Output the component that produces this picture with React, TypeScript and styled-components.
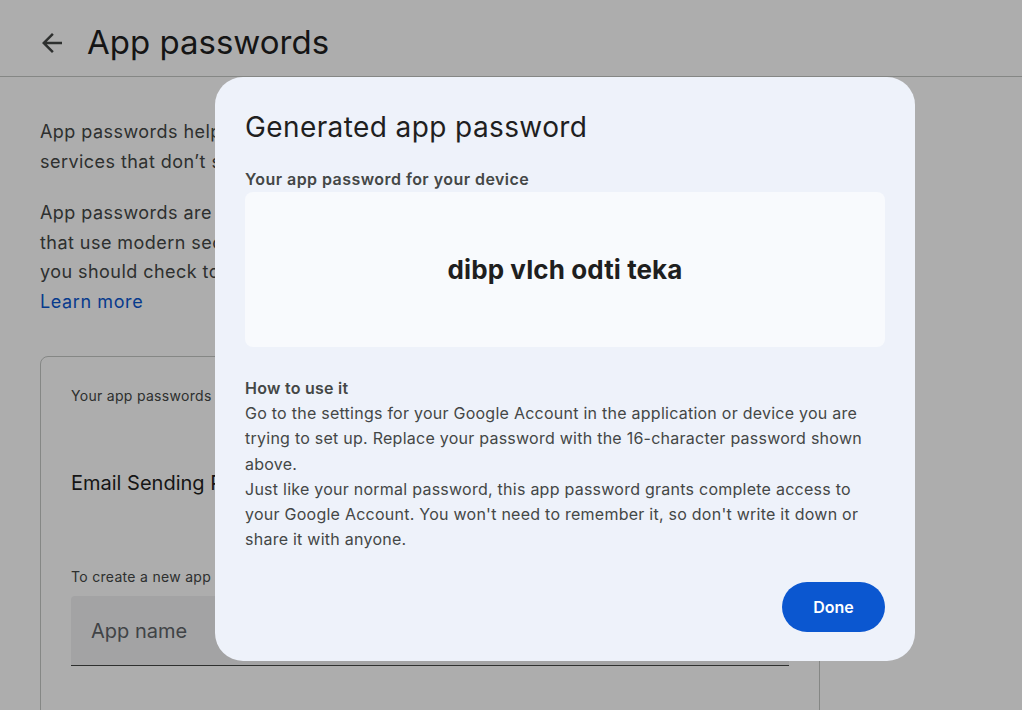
import { type FC } from 'react';
import styled, { createGlobalStyle } from 'styled-components';

const GlobalStyle = createGlobalStyle`
  html, body {
    margin: 0;
    padding: 0;
    background: #ffffff;
    font-family: Inter, 'Open Sans', Roboto, sans-serif;
    color: #1f1f1f;
  }
  * {
    box-sizing: border-box;
  }
`;

const Page = styled.div`
  position: relative;
  width: 1022px;
  height: 710px;
  overflow: hidden;
  background: #ffffff;
`;

const Header = styled.header`
  display: flex;
  align-items: center;
  gap: 20px;
  height: 77px;
  padding: 0 0 0 37px;
  border-bottom: 1px solid #c4c7c5;
`;

const BackButton = styled.button`
  display: flex;
  align-items: center;
  justify-content: center;
  width: 30px;
  height: 30px;
  padding: 0;
  border: none;
  background: none;
  color: #444746;
  margin-top: 9px;
`;

const PageTitle = styled.h1`
  margin: 0;
  font-size: 33px;
  font-weight: 400;
  line-height: 40px;
  color: #1f1f1f;
  margin-top: 7px;
`;

const Content = styled.main`
  display: flex;
  flex-direction: column;
  padding: 40px 202px 0 40px;
`;

const Paragraph = styled.p`
  margin: 0 0 22px;
  max-width: 680px;
  font-size: 18px;
  line-height: 29.5px;
  letter-spacing: 0.45px;
  color: #444746;
`;

const LearnMore = styled.a`
  align-self: flex-start;
  color: #0b57d0;
  font-size: 18px;
  line-height: 29.5px;
  letter-spacing: 0.6px;
  text-decoration: none;
  margin-top: -22px;
`;

const Card = styled.section`
  margin-top: 40px;
  border: 1px solid #c4c7c5;
  border-radius: 8px;
  padding: 29px 30px 80px 30px;
  display: flex;
  flex-direction: column;
`;

const SmallLabel = styled.div`
  font-size: 14px;
  line-height: 20px;
  letter-spacing: 0.3px;
  color: #444746;
`;

const PasswordRow = styled.div`
  display: flex;
  align-items: center;
  height: 104px;
  margin: 25px 0 32px;
  font-size: 20px;
  color: #1f1f1f;
`;

const NameField = styled.div`
  margin-top: 9px;
  height: 70px;
  display: flex;
  align-items: center;
  padding: 0 20px;
  background: #f0f1f2;
  border-bottom: 1px solid #444746;
  border-radius: 4px 4px 0 0;
  font-size: 20px;
  color: #5f6368;
`;

const Scrim = styled.div`
  position: absolute;
  inset: 0;
  background: rgba(0, 0, 0, 0.32);
`;

const Dialog = styled.div`
  position: absolute;
  left: 215px;
  top: 77px;
  width: 700px;
  height: 584px;
  border-radius: 28px;
  background: #eef2fa;
  padding: 32px 30px 29px;
  display: flex;
  flex-direction: column;
`;

const DialogTitle = styled.h2`
  margin: 0;
  font-size: 28px;
  font-weight: 400;
  line-height: 36px;
  letter-spacing: 0.4px;
  color: #1f1f1f;
`;

const DialogLabel = styled.div`
  margin-top: 22px;
  font-size: 16px;
  font-weight: 600;
  line-height: 24px;
  letter-spacing: 0.45px;
  color: #444746;
`;

const PasswordBox = styled.div`
  margin-top: 1px;
  height: 155px;
  display: flex;
  align-items: center;
  justify-content: center;
  border-radius: 8px;
  background: #f8fafd;
  font-size: 26px;
  font-weight: 700;
  letter-spacing: 0.1px;
  color: #1f1f1f;
`;

const HowTo = styled.div`
  margin-top: 29px;
  font-size: 16px;
  line-height: 25.2px;
  letter-spacing: 0.25px;
  color: #444746;

  strong {
    font-weight: 600;
    display: block;
  }

  p {
    margin: 0;
  }
`;

const Actions = styled.div`
  margin-top: auto;
  display: flex;
  justify-content: flex-end;
`;

const DoneButton = styled.button`
  height: 50px;
  width: 103px;
  border: none;
  border-radius: 25px;
  background: #0b57d0;
  color: #ffffff;
  font-family: inherit;
  font-size: 16px;
  font-weight: 600;
  cursor: pointer;
`;

const ArrowBack: FC = () => (
  <svg width="30" height="30" viewBox="0 0 24 24" fill="currentColor">
    <path d="M20 11H7.83l5.59-5.59L12 4l-8 8 8 8 1.41-1.41L7.83 13H20v-2z" />
  </svg>
);

export default function App() {
  return (
    <>
      <GlobalStyle />
      <Page>
        <Header>
          <BackButton aria-label="Back">
            <ArrowBack />
          </BackButton>
          <PageTitle>App passwords</PageTitle>
        </Header>
        <Content>
          <Paragraph>
            App passwords help you sign into your Google Account on older apps and services
            that don’t support modern security standards.
          </Paragraph>
          <Paragraph>
            App passwords are less secure than using up-to-date apps and services
            that use modern security standards. Before you create an app password,
            you should check to see if your app needs this in order to sign in.
          </Paragraph>
          <LearnMore href="#">Learn more</LearnMore>
          <Card>
            <SmallLabel>Your app passwords</SmallLabel>
            <PasswordRow>Email Sending Password</PasswordRow>
            <SmallLabel>To create a new app specific password, type a name for it below...</SmallLabel>
            <NameField>App name</NameField>
          </Card>
        </Content>
        <Scrim />
        <Dialog role="dialog">
          <DialogTitle>Generated app password</DialogTitle>
          <DialogLabel>Your app password for your device</DialogLabel>
          <PasswordBox>dibp vlch odti teka</PasswordBox>
          <HowTo>
            <strong>How to use it</strong>
            <p>
              Go to the settings for your Google Account in the application or device you are
              trying to set up. Replace your password with the 16-character password shown
              above.
            </p>
            <p>
              Just like your normal password, this app password grants complete access to
              your Google Account. You won't need to remember it, so don't write it down or
              share it with anyone.
            </p>
          </HowTo>
          <Actions>
            <DoneButton>Done</DoneButton>
          </Actions>
        </Dialog>
      </Page>
    </>
  );
}
